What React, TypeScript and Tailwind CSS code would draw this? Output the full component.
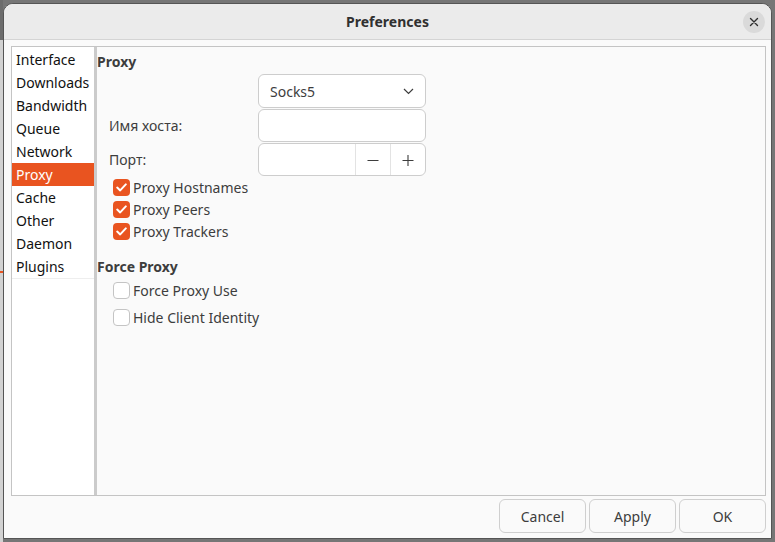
import * as React from 'react';

const SIDEBAR = ['Interface', 'Downloads', 'Bandwidth', 'Queue', 'Network', 'Proxy', 'Cache', 'Other', 'Daemon', 'Plugins'];

const CheckBox: React.FC<{ checked?: boolean; label: string; tall?: boolean }> = ({ checked, label, tall }) => (
  <div className={`flex items-center gap-[3px] pl-[16px] ${tall ? 'h-[27px]' : 'h-[22px]'}`}>
    {checked ? (
      <span className="flex h-[17px] w-[17px] items-center justify-center rounded-[4px] bg-[#e95420]">
        <svg width="11" height="9" viewBox="0 0 11 9" fill="none">
          <path d="M1.2 4.6 L4.2 7.4 L9.8 1.4" stroke="#fff" strokeWidth="2" strokeLinecap="round" strokeLinejoin="round" />
        </svg>
      </span>
    ) : (
      <span className="h-[17px] w-[17px] rounded-[4px] border border-[#c4c4c4] bg-white" />
    )}
    <span className="text-[14px] text-[#3d3d3d]">{label}</span>
  </div>
);

const App: React.FC = () => {
  return (
    <div className="flex h-[542px] w-[775px] overflow-hidden bg-[#767676] font-['Noto_Sans',sans-serif]">
      {/* background app peeking at left edge */}
      <div className="flex w-[3px] flex-col">
        <div className="h-[40px] bg-[#6c6c6c]" />
        <div className="h-[231px] bg-[#d2d2d2]" />
        <div className="h-[2px] bg-[#e95420]" />
        <div className="flex-1 bg-[#d2d2d2]" />
      </div>

      <div className="mt-[3px] flex h-[536px] w-[769px] flex-col overflow-hidden rounded-t-[10px] border border-[#555] bg-[#fafafa]">
        <header className="relative flex h-[36px] shrink-0 items-center justify-center border-b border-[#d4d4d4] bg-[#ebebeb]">
          <h1 className="text-[14px] font-bold text-[#303030]">Preferences</h1>
          <button className="absolute right-[6px] top-[7px] flex h-[22px] w-[22px] items-center justify-center rounded-full bg-[#dadada]">
            <svg width="10" height="10" viewBox="0 0 10 10">
              <path d="M1.5 1.5 L8.5 8.5 M8.5 1.5 L1.5 8.5" stroke="#2e2e2e" strokeWidth="1.4" strokeLinecap="round" />
            </svg>
          </button>
        </header>

        <div className="flex flex-1 flex-col pl-[7px] pr-[5px] pt-[6px]">
          <div className="flex h-[450px] border border-[#c4c4c4]">
            <nav className="w-[82px] bg-white pt-[1px]">
              <ul className="border-b border-[#eeeeee]">
                {SIDEBAR.map((item) => (
                  <li
                    key={item}
                    className={`flex h-[23px] items-center pl-[4px] text-[14px] ${
                      item === 'Proxy' ? 'bg-[#e95420] text-white' : 'text-[#111]'
                    }`}
                  >
                    {item}
                  </li>
                ))}
              </ul>
            </nav>
            <div className="w-[3px] bg-[#cbcbcb]" />

            <section className="flex-1 bg-[#fafafa] pt-[5px] text-[#3d3d3d]">
              <h2 className="h-[20px] text-[14px] font-bold leading-[20px]">Proxy</h2>

              <div className="mt-[2px] grid grid-cols-[149px_168px] gap-y-[1px] pl-[12px]">
                <div />
                <div className="flex h-[34px] items-center justify-between rounded-[6px] border border-[#cdcdcd] bg-white pl-[11px] pr-[11px] text-[14px]">
                  <span>Socks5</span>
                  <svg width="11" height="7" viewBox="0 0 11 7" fill="none">
                    <path d="M1 1 L5.5 5.5 L10 1" stroke="#3d3d3d" strokeWidth="1.2" />
                  </svg>
                </div>

                <label className="flex items-center text-[14px]">Имя хоста:</label>
                <input className="h-[33px] rounded-[6px] border border-[#cdcdcd] bg-white outline-none" />

                <label className="flex items-center text-[14px]">Порт:</label>
                <div className="flex h-[33px] overflow-hidden rounded-[6px] border border-[#cdcdcd] bg-white">
                  <div className="flex-1" />
                  <div className="flex w-[35px] items-center justify-center border-l border-[#e3e3e3]">
                    <svg width="12" height="12" viewBox="0 0 12 12">
                      <path d="M0.5 6.5 H11.5" stroke="#3d3d3d" strokeWidth="1.1" />
                    </svg>
                  </div>
                  <div className="flex w-[35px] items-center justify-center border-l border-[#e3e3e3]">
                    <svg width="12" height="12" viewBox="0 0 12 12">
                      <path d="M0.5 6.5 H11.5 M6 1 V12" stroke="#3d3d3d" strokeWidth="1.1" />
                    </svg>
                  </div>
                </div>
              </div>

              <CheckBox checked label="Proxy Hostnames" />
              <CheckBox checked label="Proxy Peers" />
              <CheckBox checked label="Proxy Trackers" />

              <h2 className="mt-[15px] h-[20px] text-[14px] font-bold leading-[20px]">Force Proxy</h2>
              <CheckBox tall label="Force Proxy Use" />
              <CheckBox tall label="Hide Client Identity" />
            </section>
          </div>

          <div className="mt-[3px] flex justify-end gap-[3px]">
            {['Cancel', 'Apply', 'OK'].map((b) => (
              <button
                key={b}
                className="h-[34px] w-[87px] rounded-[6px] border border-[#cfcfcf] bg-[#fafafa] text-[14px] text-[#3d3d3d]"
              >
                {b}
              </button>
            ))}
          </div>
        </div>
      </div>
    </div>
  );
};

export default App;
